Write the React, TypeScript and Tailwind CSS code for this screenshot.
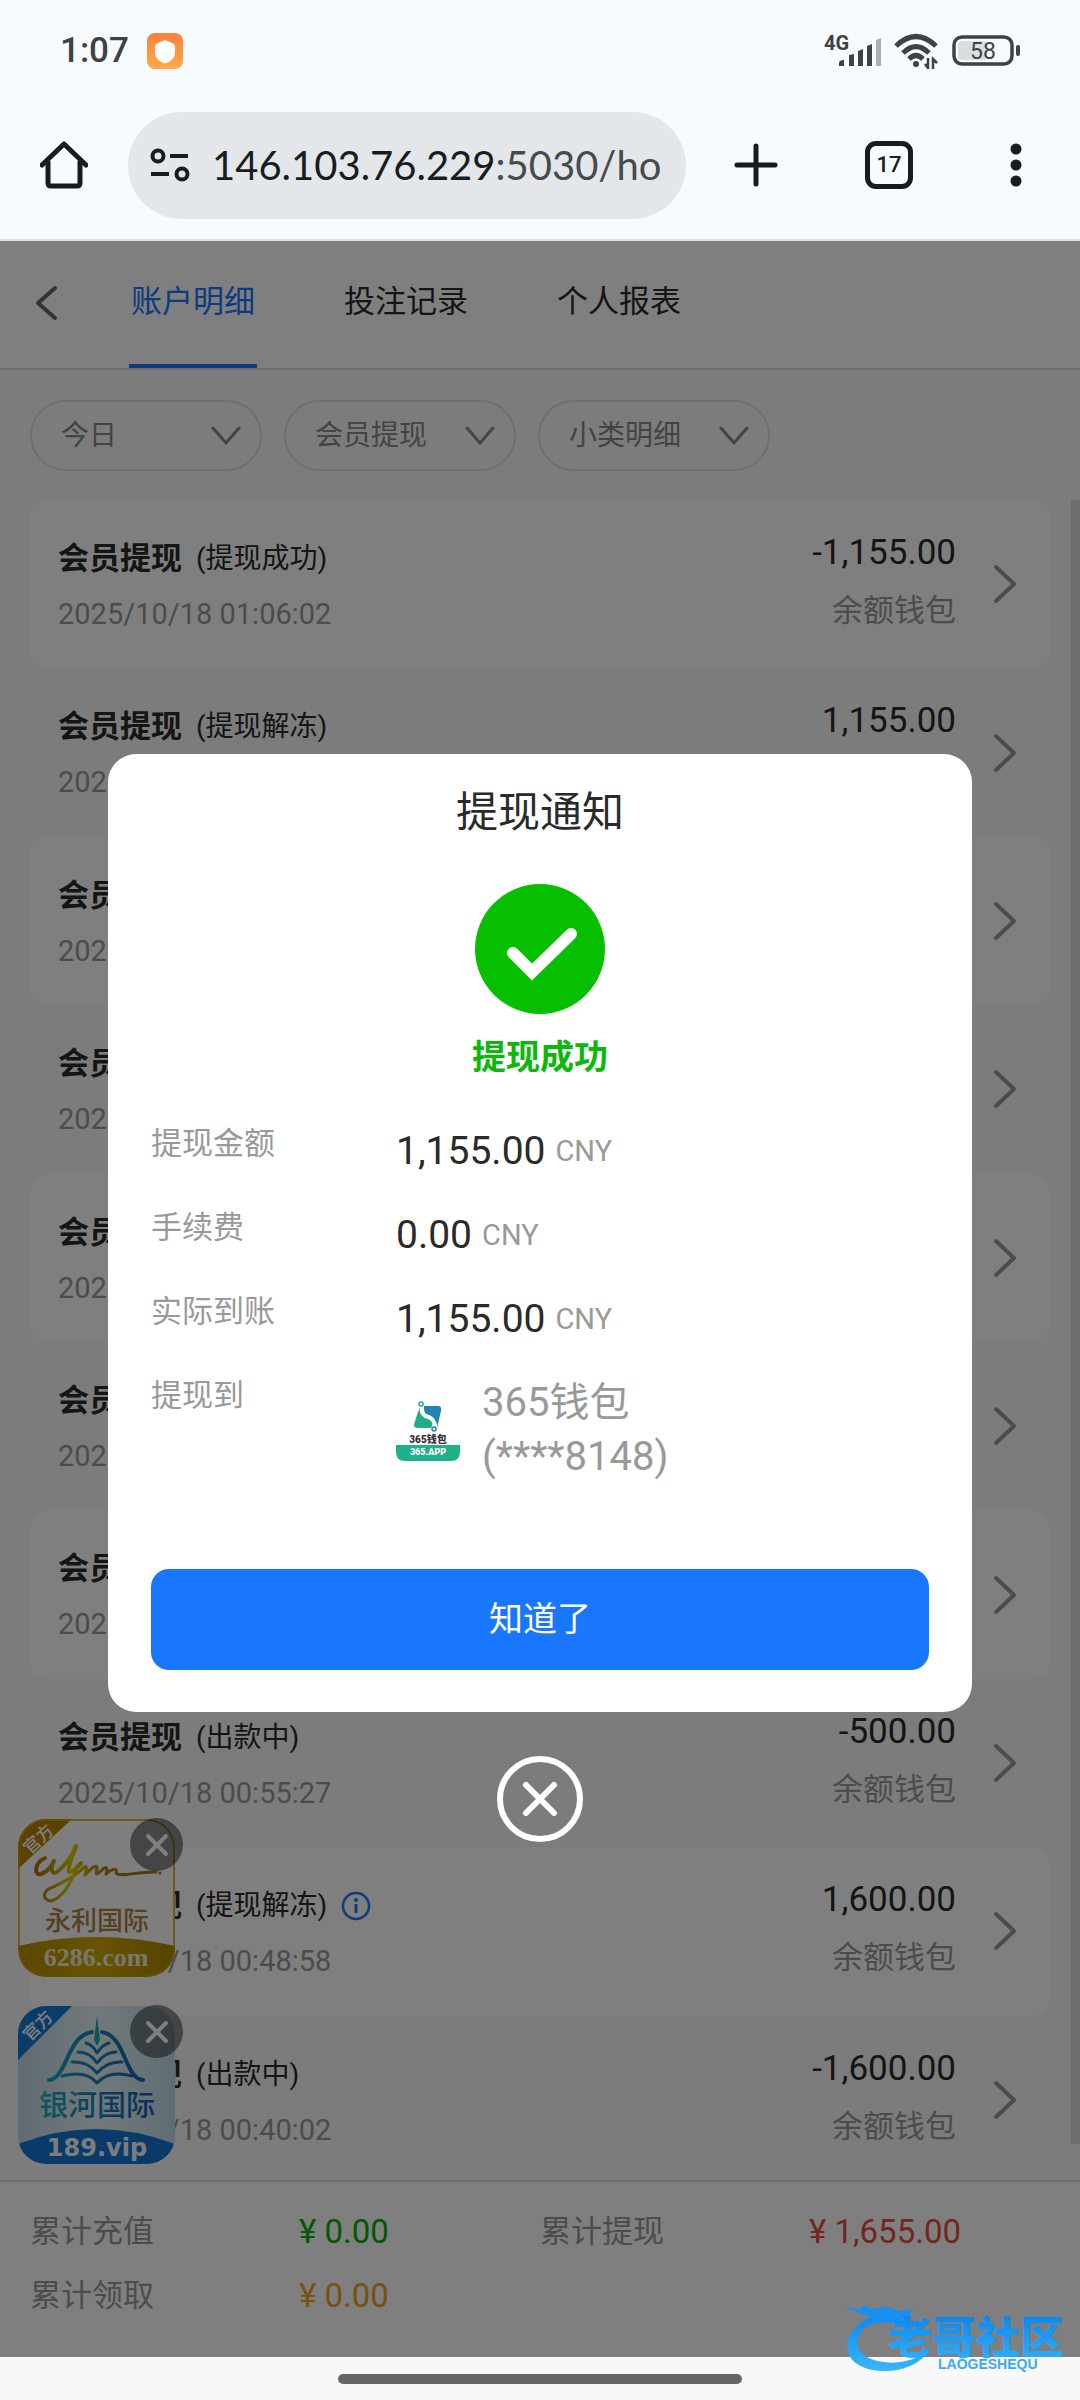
import { useState } from "react";

type RecordRow = {
  status: string;
  time: string;
  amount: string;
  info?: boolean;
};

const RECORDS: RecordRow[] = [
  { status: "提现成功", time: "2025/10/18 01:06:02", amount: "-1,155.00" },
  { status: "提现解冻", time: "2025/10/18 01:05:40", amount: "1,155.00" },
  { status: "出款中", time: "2025/10/18 01:04:12", amount: "-1,155.00" },
  { status: "提现解冻", time: "2025/10/18 01:02:51", amount: "1,155.00" },
  { status: "出款中", time: "2025/10/18 01:01:33", amount: "-1,155.00" },
  { status: "提现成功", time: "2025/10/18 00:59:20", amount: "-500.00" },
  { status: "提现解冻", time: "2025/10/18 00:57:08", amount: "500.00" },
  { status: "出款中", time: "2025/10/18 00:55:27", amount: "-500.00" },
  { status: "提现解冻", time: "2025/10/18 00:48:58", amount: "1,600.00", info: true },
  { status: "出款中", time: "2025/10/18 00:40:02", amount: "-1,600.00" },
];

const FILTERS = [
  { label: "日期", value: "今日" },
  { label: "大类", value: "会员提现" },
  { label: "小类", value: "小类明细" },
];

const TABS = ["账户明细", "投注记录", "个人报表"];

function StatusBar() {
  return (
    <div className="flex h-[102px] items-center justify-between pr-[58px] pl-[60px]">
      <div className="flex items-center gap-[18px]">
        <span className="text-[35px] leading-[44px] font-medium text-[#3c4245]">1:07</span>
        <svg width="36" height="36" viewBox="0 0 36 36" aria-hidden="true">
          <defs>
            <linearGradient id="shield" x1="0" y1="0" x2="0" y2="1">
              <stop offset="0" stopColor="#fd8040" />
              <stop offset="1" stopColor="#fdab45" />
            </linearGradient>
          </defs>
          <rect width="36" height="36" rx="8" fill="url(#shield)" />
          <path
            d="M18 7 26 10.5Q28 11.500 28 13.500V20Q28 27 18 30.500 8 27 8 20V13.500Q8 11.500 10 10.500Z"
            fill="#fff"
          />
        </svg>
      </div>
      <div className="flex items-center gap-3">
        <svg width="60" height="40" viewBox="0 0 60 40" fill="#3c4245" aria-hidden="true">
          <text x="2" y="19" fontFamily="Roboto" fontWeight="700" fontSize="20">
            4G
          </text>
          <path d="M17 35v-3q0-3 5-3v6zM27 35V24l5-1v12zM36 35V20l5-2v17zM45 35V15l5-2v22z" />
          <path d="M54 35V9l5-2v28z" fill="#acb0b2" />
        </svg>
        <svg width="46" height="36" viewBox="0 0 46 36" fill="none" stroke="#3c4245" strokeWidth="5" aria-hidden="true">
          <path d="M2 13Q22-6 42 13M9 20Q22 7 35 20M15 26Q22 19 29 26" />
          <circle cx="22" cy="31" r="3" fill="#3c4245" stroke="none" />
          <path d="M34 25v10l-3-4M39 36V26l4 4" strokeWidth="2.500" />
        </svg>
        <svg width="70" height="32" viewBox="0 0 70 32" aria-hidden="true">
          <rect x="2" y="2" width="58" height="27" rx="8" fill="none" stroke="#3c4245" strokeWidth="3.500" />
          <rect x="6" y="6" width="29" height="19" rx="4" fill="#dadedf" />
          <rect x="64" y="10" width="4" height="11" rx="2" fill="#3c4245" />
          <text x="31" y="24" textAnchor="middle" fontFamily="Roboto" fontSize="23" fill="#3c4245">
            58
          </text>
        </svg>
      </div>
    </div>
  );
}

function BrowserBar() {
  return (
    <div className="flex h-[126px] items-center pr-[44px] pl-10 text-[#171c1f]">
      <button aria-label="主页" className="h-12 w-12">
        <svg width="48" height="48" viewBox="0 0 48 48" fill="none" stroke="currentColor" strokeWidth="5" aria-hidden="true">
          <path d="M2 24 24 3l22 21" strokeLinejoin="round" strokeLinecap="round" />
          <path d="M8 20v22q0 3 3 3h26q3 0 3-3V20" />
        </svg>
      </button>
      <button
        aria-label="网址"
        className="ml-10 flex h-[107px] min-w-0 flex-1 items-center rounded-full bg-[#e3e7ea] pl-[22px]"
      >
        <svg width="40" height="36" viewBox="0 0 40 36" fill="none" stroke="currentColor" strokeWidth="4" className="shrink-0" aria-hidden="true">
          <circle cx="8" cy="9" r="5.500" />
          <path d="M20 9h18M1 27h18" />
          <circle cx="32" cy="27" r="5.500" />
        </svg>
        <span className="ml-[22px] overflow-hidden font-['Lato'] text-[40px] leading-[56px] whitespace-nowrap">
          146.103.76.229<span className="text-[#454b4f]">:5030/ho</span>
        </span>
      </button>
      <button aria-label="新标签页" className="ml-12">
        <svg width="44" height="44" viewBox="0 0 44 44" stroke="currentColor" strokeWidth="5" strokeLinecap="round" aria-hidden="true">
          <path d="M22 3v38M3 22h38" />
        </svg>
      </button>
      <button
        aria-label="17 个标签页"
        className="ml-[87px] h-12 w-12 rounded-[11px] border-[5px] border-current font-[Roboto] text-[22px] leading-[38px] font-medium"
      >
        17
      </button>
      <button aria-label="更多" className="ml-[83px] flex w-10 justify-center">
        <svg width="12" height="44" viewBox="0 0 12 44" fill="currentColor" aria-hidden="true">
          <circle cx="6" cy="6" r="5.500" />
          <circle cx="6" cy="22" r="5.500" />
          <circle cx="6" cy="38" r="5.500" />
        </svg>
      </button>
    </div>
  );
}

function Chevron({ className, d, w, h }: { className?: string; d: string; w: number; h: number }) {
  return (
    <svg
      width={w}
      height={h}
      viewBox={`0 0 ${w} ${h}`}
      fill="none"
      stroke="currentColor"
      strokeWidth="4"
      strokeLinecap="round"
      strokeLinejoin="round"
      className={className}
      aria-hidden="true"
    >
      <path d={d} />
    </svg>
  );
}

function Row({ row, striped }: { row: RecordRow; striped: boolean }) {
  return (
    <li className={striped ? "flex rounded-[18px] bg-white" : "flex"}>
      <a href="#record" className="flex flex-1 items-center pr-[33px] pl-7">
        <div className="flex-1 self-start pt-[35px]">
          <div className="flex items-center gap-[14px] leading-[48px] text-[#2a2a2a]">
            <span className="text-[31px] font-bold">会员提现</span>
            <span className="text-[28px]">({row.status})</span>
            {row.info && (
              <svg width="30" height="30" viewBox="0 0 30 30" fill="none" stroke="#1976ff" strokeWidth="2.500" aria-hidden="true">
                <circle cx="15" cy="15" r="13" />
                <path d="M15 13v9" strokeWidth="3" />
                <circle cx="15" cy="9" r="2" fill="#1976ff" stroke="none" />
              </svg>
            )}
          </div>
          <div className="mt-[9px] text-[29px] leading-[44px] text-[#999]">{row.time}</div>
        </div>
        <div className="self-start pt-[31px] text-right">
          <div className="text-[35px] leading-[44px] text-[#2a2a2a]">{row.amount}</div>
          <div className="mt-[14px] text-[31px] leading-[44px] text-[#999]">余额钱包</div>
        </div>
        <Chevron className="ml-[37px] text-[#999]" w={24} h={40} d="M3 3 21 20 3 37" />
      </a>
    </li>
  );
}

function CloseBadge() {
  return (
    <button aria-label="关闭" className="absolute -top-px -right-2 flex h-[53px] w-[53px] items-center justify-center rounded-full bg-black/45">
      <svg width="24" height="24" viewBox="0 0 24 24" stroke="#fff" strokeWidth="4" strokeLinecap="round" aria-hidden="true">
        <path d="M3 3 21 21M21 3 3 21" />
      </svg>
    </button>
  );
}

function GoldPromo() {
  return (
    <div className="relative">
      <svg width="157" height="158" viewBox="0 0 157 158" role="img" aria-label="永利国际">
        <defs>
          <clipPath id="goldClip">
            <rect width="157" height="158" rx="28" />
          </clipPath>
          <linearGradient id="goldInk" gradientUnits="userSpaceOnUse" x1="17" y1="0" x2="140" y2="0">
            <stop offset="0" stopColor="#a86c10" />
            <stop offset="0.300" stopColor="#dccc00" />
            <stop offset="0.550" stopColor="#b07a18" />
            <stop offset="1" stopColor="#a87420" />
          </linearGradient>
          <linearGradient id="goldBand" x1="0" y1="0" x2="1" y2="0">
            <stop offset="0" stopColor="#b48c00" />
            <stop offset="0.500" stopColor="#d0a800" />
            <stop offset="1" stopColor="#ac8600" />
          </linearGradient>
        </defs>
        <g clipPath="url(#goldClip)">
          <rect width="157" height="158" fill="#fcfcfc" />
          <path d="M0 0h54L0 50z" fill="#b88400" />
          <path d="M0 127Q78 109 157 127V158H0z" fill="url(#goldBand)" />
        </g>
        <rect x="1" y="1" width="155" height="156" rx="27" fill="none" stroke="#c8a000" strokeWidth="1.500" />
        <text transform="translate(12 36) rotate(-43)" fontSize="17" fill="#fff" fontFamily="Noto Sans CJK SC" fontWeight="500">
          官方
        </text>
        <g fill="none" stroke="url(#goldInk)" strokeLinecap="round" strokeLinejoin="round">
          <path
            d="M27 39C16 44 16 57 23 55 30 53 35 45 36 42 32 51 34 56 39 53 47 47 55 36 58 27 55 36 49 49 51 53 55 53 60 48 63 44"
            strokeWidth="4"
          />
          <path
            d="M60 46C54 62 45 79 33 82 23 81 26 71 33 69 43 64 58 58 66 48 70 46 68 52 67 56 73 49 80 44 79 50 77 57 79 56 85 50 89 47 90 50 88 55 94 50 100 48 98 54 103 59 120 52 138 53"
            strokeWidth="3"
          />
        </g>
        <circle cx="142" cy="54" r="1.500" fill="#a87420" />
        <text x="79" y="111" textAnchor="middle" fontSize="26" fill="#ac8140" fontFamily="Noto Sans CJK SC" fontWeight="500">
          永利国际
        </text>
        <text x="78" y="147" textAnchor="middle" fontSize="26" fill="#f4f0d8" fontFamily="Liberation Serif" fontWeight="700">
          6286.com
        </text>
      </svg>
      <CloseBadge />
    </div>
  );
}

function BluePromo() {
  return (
    <div className="relative">
      <svg width="157" height="158" viewBox="0 0 157 158" role="img" aria-label="银河国际">
        <defs>
          <clipPath id="blueClip">
            <rect width="157" height="158" rx="28" />
          </clipPath>
          <linearGradient id="sky" x1="0" y1="0" x2="1" y2="0">
            <stop offset="0" stopColor="#c0d8e4" />
            <stop offset="0.500" stopColor="#e4f2f4" />
            <stop offset="1" stopColor="#c0dce8" />
          </linearGradient>
          <linearGradient id="seaInk" gradientUnits="userSpaceOnUse" x1="15" y1="0" x2="140" y2="0">
            <stop offset="0" stopColor="#18b8b8" />
            <stop offset="0.400" stopColor="#1888c0" />
            <stop offset="1" stopColor="#1858b0" />
          </linearGradient>
        </defs>
        <g clipPath="url(#blueClip)">
          <rect width="157" height="158" fill="url(#sky)" />
          <path d="M0 0h54L0 54z" fill="#1478d4" />
          <path d="M0 138Q78 108 157 138V158H0z" fill="#1274d4" />
        </g>
        <text transform="translate(12 36) rotate(-45)" fontSize="17" fill="#fff" fontFamily="Noto Sans CJK SC" fontWeight="500">
          官方
        </text>
        <g fill="none" stroke="url(#seaInk)" strokeLinecap="round">
          <path d="M31 74C50 72 48 30 74 26" strokeWidth="4" />
          <path d="M125 74C106 72 108 30 84 26" strokeWidth="4" />
          <path d="M79 47Q75 39 68 37M79 47Q84 39 91 37M79 57Q72 46 60 46M79 57Q87 46 98 46M79 67Q70 55 54 56M79 67Q89 55 104 56M79 77Q68 64 44 70M79 77Q91 64 114 70" strokeWidth="3" />
        </g>
        <path d="M79 10 82 34 79 40 76 34z" fill="#18a8b0" />
        <text x="79" y="110" textAnchor="middle" fontSize="29" fill="url(#seaInk)" fontFamily="Noto Sans CJK SC" fontWeight="500">
          银河国际
        </text>
        <text x="79" y="150" textAnchor="middle" fontSize="24" fill="#f4fafc" fontFamily="DejaVu Sans" fontWeight="700">
          189.vip
        </text>
      </svg>
      <CloseBadge />
    </div>
  );
}

function WalletLogo() {
  return (
    <svg width="64" height="64" viewBox="0 0 64 64" className="shrink-0" role="img" aria-label="365钱包">
      <path d="M24 9Q19 22 18 27 18 30 22 30H35Q39 24 32 21 23 19 24 9z" fill="#22ac88" />
      <path d="M28 8H43Q46 9 45 13L41 30Q42 23 35 19 27 17 28 8z" fill="#1c88b0" />
      <path d="M26 8Q22 16 32 18 41 21 37 30" fill="none" stroke="#fff" strokeWidth="2.500" />
      <circle cx="25" cy="6" r="2" fill="none" stroke="#22ac88" strokeWidth="1.500" />
      <circle cx="38" cy="31" r="2" fill="none" stroke="#1c88b0" strokeWidth="1.500" />
      <text x="32" y="45" textAnchor="middle" fontSize="10" fontWeight="900" fontFamily="Roboto, Noto Sans CJK SC" fill="#333">
        365钱包
      </text>
      <path d="M0 47H64V54Q64 63 55 63H9Q0 63 0 54z" fill="#1fb288" />
      <text x="32" y="57" textAnchor="middle" fontSize="9" fontWeight="900" fontFamily="Roboto" fill="#fff">
        365.APP
      </text>
    </svg>
  );
}

function Money({ value }: { value: string }) {
  return (
    <dd className="flex items-center gap-[10px] leading-[60px]">
      <span className="text-[39px] text-[#2a2a2a]">{value}</span>
      <span className="text-[29px] text-[#999]">CNY</span>
    </dd>
  );
}

function Notice({ onClose }: { onClose: () => void }) {
  const labelClass = "text-[31px] leading-[46px] text-[#999]";
  return (
    <div className="absolute inset-0 z-10 flex flex-col items-center justify-center bg-black/50 pb-[3px]">
      <div
        role="dialog"
        aria-labelledby="notice-title"
        className="flex w-4/5 flex-col items-center rounded-[28px] bg-white px-[43px] pt-[27px] pb-[42px]"
      >
        <h2 id="notice-title" className="text-[42px] leading-[64px] text-[#2a2a2a]">
          提现通知
        </h2>
        <svg width="130" height="130" viewBox="0 0 130 130" className="mt-[39px]" aria-hidden="true">
          <circle cx="65" cy="65" r="65" fill="#06c000" />
          <path d="M38 69 57 88 96 50" fill="none" stroke="#fff" strokeWidth="12" strokeLinecap="round" />
        </svg>
        <p className="mt-[18px] text-[34px] leading-[50px] font-bold text-[#0db80d]">提现成功</p>
        <dl className="mt-[39px] grid w-full grid-cols-[245px_1fr] gap-y-6">
          <dt className={labelClass}>提现金额</dt>
          <Money value="1,155.00" />
          <dt className={labelClass}>手续费</dt>
          <Money value="0.00" />
          <dt className={labelClass}>实际到账</dt>
          <Money value="1,155.00" />
          <dt className={labelClass}>提现到</dt>
          <dd className="flex items-center gap-[22px] pt-[3px] text-[40px] leading-[54px] text-[#999]">
            <WalletLogo />
            <span>
              365钱包
              <br />
              (****8148)
            </span>
          </dd>
        </dl>
        <button
          onClick={onClose}
          className="mt-[85px] h-[101px] w-full rounded-[18px] bg-[#1976ff] text-[34px] text-white"
        >
          知道了
        </button>
      </div>
      <button aria-label="关闭通知" onClick={onClose} className="mt-11">
        <svg width="86" height="86" viewBox="0 0 86 86" fill="none" stroke="#fff" strokeWidth="6" strokeLinecap="round" aria-hidden="true">
          <circle cx="43" cy="43" r="40" />
          <path d="M29 29 57 57M57 29 29 57" />
        </svg>
      </button>
    </div>
  );
}

function Total({ label, value, color }: { label: string; value: string; color: string }) {
  return (
    <div className="flex leading-[64px]">
      <span className="w-[269px] text-[31px] text-[#999]">{label}</span>
      <span className={color}>¥ {value}</span>
    </div>
  );
}

function Watermark() {
  return (
    <svg width="232" height="72" viewBox="0 0 232 72" className="absolute right-[6px] bottom-[25px] z-20" role="img" aria-label="老哥社区">
      <defs>
        <linearGradient id="azure" gradientUnits="userSpaceOnUse" x1="0" y1="10" x2="0" y2="66">
          <stop offset="0" stopColor="#0a86ee" />
          <stop offset="1" stopColor="#38b4fc" />
        </linearGradient>
      </defs>
      <path
        d="M34 12C-2 24-8 64 38 68 62 69 82 60 90 42 82 54 62 62 42 59 10 56 6 30 34 18z"
        fill="url(#azure)"
      />
      <path
        d="M2 4 18 6 22 2 30 6 44 4 58 8 72 6 66 12 72 13 58 16 70 20 52 20 36 20 26 22 32 14 22 12z"
        fill="#1690f2"
      />
      <text x="46" y="51" fontSize="44" fontWeight="900" fontFamily="Noto Sans CJK SC" fill="url(#azure)">
        老哥社区
      </text>
      <text x="96" y="66" fontSize="14" fontWeight="700" fontFamily="Liberation Sans" fill="#3aaaf8">
        LAOGESHEQU
      </text>
    </svg>
  );
}

export default function App() {
  const [open, setOpen] = useState(true);
  return (
    <div className="relative flex min-h-screen flex-col bg-[#f7fbfe] font-['Roboto','Noto_Sans_CJK_SC',sans-serif]">
      <header className="border-b-2 border-[#dcdfe1] pb-[11px]">
        <StatusBar />
        <BrowserBar />
      </header>

      <main className="relative flex flex-1 flex-col bg-[#f8f8f8]">
        <nav className="flex h-[129px] items-stretch border-b-2 border-[#dedede] bg-white pl-[34px]">
          <button aria-label="返回" className="mb-1 text-[#666]">
            <Chevron w={24} h={36} d="M21 3 4 18 21 33" />
          </button>
          <div className="ml-[71px] flex gap-[85px] text-[31px] text-[#2a2a2a]">
            {TABS.map((tab, i) => (
              <button
                key={tab}
                className={
                  i === 0
                    ? "w-32 border-b-4 border-[#1976ff] text-[#1976ff]"
                    : "w-32 border-b-4 border-transparent"
                }
              >
                {tab}
              </button>
            ))}
          </div>
        </nav>

        <div className="flex gap-[22px] px-[30px] pt-[30px]">
          {FILTERS.map((f) => (
            <label key={f.label} className="relative flex w-[232px] items-center text-[#888]">
              <select
                aria-label={f.label}
                className="h-[71px] w-full appearance-none rounded-full border-2 border-[#dedede] pl-[29px] text-[28px] leading-[44px]"
              >
                <option>{f.value}</option>
              </select>
              <svg
                width="30"
                height="20"
                viewBox="0 0 30 20"
                fill="none"
                stroke="currentColor"
                strokeWidth="3"
                strokeLinecap="round"
                className="pointer-events-none absolute right-[21px]"
                aria-hidden="true"
              >
                <path d="M2 2 15 17 28 2" />
              </svg>
            </label>
          ))}
        </div>

        <div className="relative mt-[29px] flex flex-1 flex-col px-[30px]">
          <ul className="-mb-1 grid flex-1 auto-rows-fr">
            {RECORDS.map((row, i) => (
              <Row key={row.time} row={row} striped={i % 2 === 0} />
            ))}
          </ul>
          <div className="absolute top-0 right-0 bottom-9 w-[9px] bg-[#dcdcdc]" />
        </div>

        <footer className="grid grid-cols-2 border-t-2 border-[#dedede] bg-white px-[30px] pt-[18px] pb-[29px] text-[33px]">
          <Total label="累计充值" value="0.00" color="text-[#06b006]" />
          <Total label="累计提现" value="1,655.00" color="text-[#e84c3c]" />
          <Total label="累计领取" value="0.00" color="text-[#f0a020]" />
        </footer>

        <aside className="absolute bottom-[193px] left-[18px] flex flex-col gap-[29px]">
          <GoldPromo />
          <BluePromo />
        </aside>

        {open && <Notice onClose={() => setOpen(false)} />}
      </main>

      <div className="flex h-[43px] items-center justify-center bg-[#f8f8f8]">
        <div className="h-[10px] w-[404px] rounded-full bg-[#666]" />
      </div>
      <Watermark />
    </div>
  );
}
